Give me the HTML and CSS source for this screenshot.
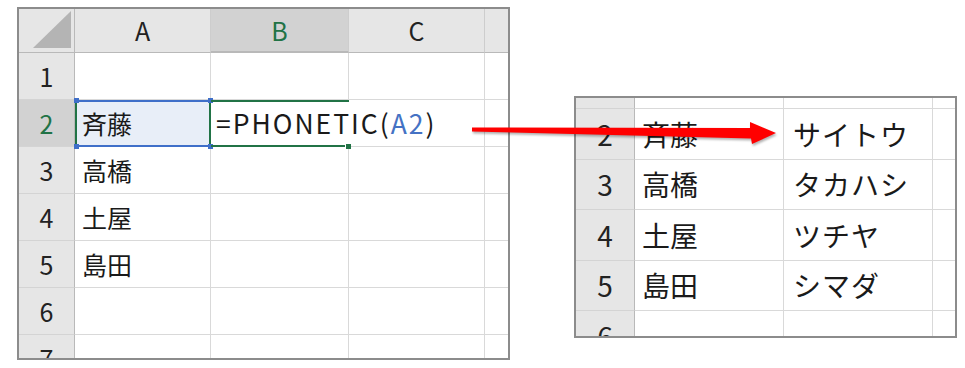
FILE: index.html
```html
<!DOCTYPE html>
<html lang="ja">
<head>
  <meta charset="UTF-8">
  <meta name="viewport" content="width=device-width, initial-scale=1.0">
  <title>PHONETIC関数</title>
  <link rel="stylesheet" href="styles.css">
</head>
<body>

  <div class="page">
    <!-- 入力側のシート -->
    <div class="sheet sheet-main">
      <div class="cell hd corner">
        <svg class="corner-mark" width="38" height="37" viewBox="0 0 38 37"><polygon points="38,0 38,37 0,37" fill="#b4b4b4"/></svg>
      </div>
      <div class="cell hd col">A</div>
      <div class="cell hd col col-on">B</div>
      <div class="cell hd col">C</div>
      <div class="cell hd col last"></div>

      <div class="cell hd row">1</div>
      <div class="cell"></div>
      <div class="cell"></div>
      <div class="cell"></div>
      <div class="cell last"></div>

      <div class="cell hd row row-on">2</div>
      <div class="cell txt ref">斉藤
        <span class="knob tl"></span><span class="knob tr"></span><span class="knob bl"></span><span class="knob br"></span>
      </div>
      <div class="cell txt edit">=PHONETIC(<span class="ref-text">A2</span>)<span class="fill-knob"></span></div>
      <div class="cell"></div>
      <div class="cell last"></div>

      <div class="cell hd row">3</div>
      <div class="cell txt">高橋</div>
      <div class="cell"></div>
      <div class="cell"></div>
      <div class="cell last"></div>

      <div class="cell hd row">4</div>
      <div class="cell txt">土屋</div>
      <div class="cell"></div>
      <div class="cell"></div>
      <div class="cell last"></div>

      <div class="cell hd row">5</div>
      <div class="cell txt">島田</div>
      <div class="cell"></div>
      <div class="cell"></div>
      <div class="cell last"></div>

      <div class="cell hd row">6</div>
      <div class="cell"></div>
      <div class="cell"></div>
      <div class="cell"></div>
      <div class="cell last"></div>

      <div class="cell hd row">7</div>
      <div class="cell"></div>
      <div class="cell"></div>
      <div class="cell"></div>
      <div class="cell last"></div>
    </div>

    <!-- 結果側のシート -->
    <div class="sheet sheet-result">
      <div class="cell hd row"></div>
      <div class="cell"></div>
      <div class="cell"></div>
      <div class="cell last"></div>

      <div class="cell hd row">2</div>
      <div class="cell txt">斉藤</div>
      <div class="cell txt kana">サイトウ</div>
      <div class="cell last"></div>

      <div class="cell hd row">3</div>
      <div class="cell txt">高橋</div>
      <div class="cell txt kana">タカハシ</div>
      <div class="cell last"></div>

      <div class="cell hd row">4</div>
      <div class="cell txt">土屋</div>
      <div class="cell txt kana">ツチヤ</div>
      <div class="cell last"></div>

      <div class="cell hd row">5</div>
      <div class="cell txt">島田</div>
      <div class="cell txt kana">シマダ</div>
      <div class="cell last"></div>

      <div class="cell hd row">6</div>
      <div class="cell"></div>
      <div class="cell"></div>
      <div class="cell last"></div>
    </div>

    <svg class="arrow" width="965" height="368" viewBox="0 0 965 368">
      <polygon points="472,127.5 750,128 750,122 776,133 752,144 751,138.5 472,131.5" fill="#ff0000"/>
    </svg>
  </div>

</body>
</html>
```

FILE: styles.css
```css
body {
  margin: 0;
  background-color: #ffffff;
  font-family: "Noto Sans CJK JP", "Noto Sans", sans-serif;
  color: #1a1a1a;
}

.page {
  position: relative;
  width: 965px;
  height: 368px;
  box-sizing: border-box;
  padding: 7px 0 0 17px;
  display: flex;
  align-items: flex-start;
}

.sheet {
  display: grid;
  border: 2px solid #8c8c8c;
  overflow: hidden;
  background-color: #ffffff;
}

.sheet-main {
  grid-template-columns: 56px 136px 138px 136px 23px;
  grid-template-rows: 44px repeat(7, 47px);
  height: 349px;
  font-size: 25px;
}

.sheet-result {
  margin-left: 64px;
  margin-top: 89px;
  grid-template-columns: 59px 149px 149px 22px;
  grid-template-rows: 11px repeat(5, 50.5px);
  height: 238px;
  font-size: 28px;
}

.cell {
  box-sizing: border-box;
  border-right: 1px solid #d9d9d9;
  border-bottom: 1px solid #d9d9d9;
  display: flex;
  align-items: center;
  white-space: nowrap;
  min-width: 0;
  line-height: 1;
}

.cell.last {
  border-right: none;
}

.hd {
  background-color: #e6e6e6;
  justify-content: center;
  color: #222222;
  border-right-color: #cdcdcd;
  border-bottom-color: #cdcdcd;
}

.hd.col {
  border-bottom-color: #b9b9b9;
}

.hd.row {
  border-right-color: #b9b9b9;
  border-bottom-color: #d4d4d4;
}

.corner {
  align-items: flex-end;
  justify-content: flex-end;
  padding: 0 3px 4px 0;
  border-bottom-color: #b9b9b9;
  border-right-color: #b9b9b9;
}

.corner-mark {
  display: block;
}

.col-on,
.row-on {
  background-color: #d2d2d2;
  color: #217346;
}

.col-on {
  border-bottom: 2px solid #217346;
}

.txt {
  padding-left: 7px;
}

.kana {
  padding-left: 9px;
  letter-spacing: 1px;
}

.ref {
  position: relative;
  background-color: #e8eef8;
  border-top: 2px solid #3f6fc9;
  border-bottom: 2px solid #3f6fc9;
  border-left: 2px solid #217346;
  border-right: 2px solid #217346;
  padding-left: 5px;
}

.knob {
  position: absolute;
  width: 5px;
  height: 5px;
  background-color: #3f6fc9;
}

.knob.tl { left: -3px; top: -4px; }
.knob.tr { right: -4px; top: -4px; }
.knob.bl { left: -3px; bottom: -4px; }
.knob.br { right: -4px; bottom: -4px; }

.edit {
  position: relative;
  z-index: 1;
  overflow: visible;
  border-top: 2px solid #217346;
  border-bottom: 2px solid #217346;
  border-right: none;
  padding-left: 5px;
  font-size: 26.5px;
  letter-spacing: 2px;
}

.ref-text {
  color: #4472c4;
}

.fill-knob {
  position: absolute;
  right: -2px;
  bottom: -4px;
  width: 5px;
  height: 5px;
  background-color: #217346;
  border-left: 1px solid #ffffff;
}

.arrow {
  position: absolute;
  left: 0;
  top: 0;
  pointer-events: none;
  filter: drop-shadow(1px 2px 1px rgba(0, 0, 0, 0.3));
}
```
